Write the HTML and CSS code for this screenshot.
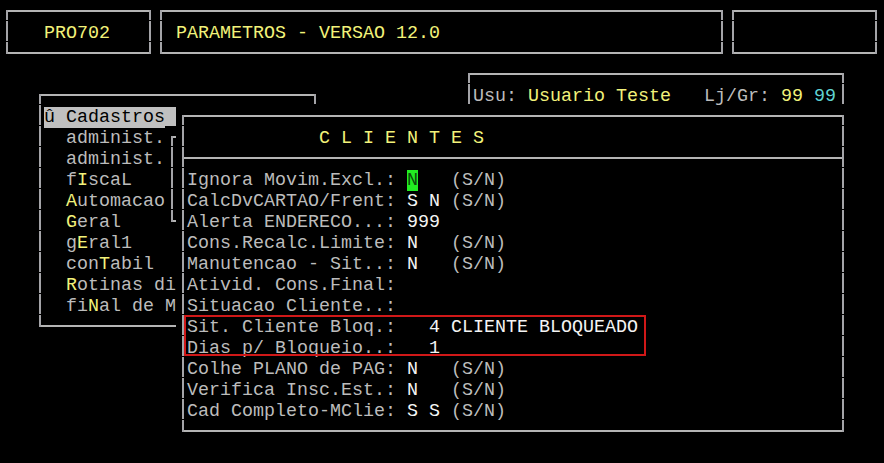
FILE: index.html
```html
<!DOCTYPE html>
<html lang="pt">
<head>
<meta charset="utf-8">
<title>PRO702 - Parametros</title>
<link rel="stylesheet" href="styles.css">
</head>
<body>
<div class="screen">
  <div class="win w-prog"><div class="line">   <span class="y">PRO702</span></div></div>
  <div class="win w-title"><div class="line"> <span class="y">PARAMETROS - VERSAO 12.0</span></div></div>
  <div class="win w-blank"></div>

  <div class="win w-user"><div class="line">Usu: <span class="y">Usuario Teste</span>   Lj/Gr: <span class="y">99</span> <span class="c">99</span></div></div>

  <div class="win w-menu">
    <div class="line"><span class="sel">û Cadastros </span></div>
    <div class="line">  administ.</div>
    <div class="line">  administ.</div>
    <div class="line">  f<span class="y">I</span>scaL</div>
    <div class="line">  <span class="y">A</span>utomacao</div>
    <div class="line">  <span class="y">G</span>eral</div>
    <div class="line">  g<span class="y">E</span>ral1</div>
    <div class="line">  con<span class="y">T</span>abil</div>
    <div class="line">  <span class="y">R</span>otinas di</div>
    <div class="line">  fi<span class="y">N</span>al de M</div>
  </div>

  <div class="win w-sub"></div>

  <div class="win w-cli">
    <div class="line">            <span class="y">C L I E N T E S</span></div>
    <div class="sep"></div>
    <div class="line">Ignora Movim.Excl.: <span class="cur">N</span>   (S/N)</div>
    <div class="line">CalcDvCARTAO/Frent: <span class="v">S N</span> (S/N)</div>
    <div class="line">Alerta ENDERECO...: <span class="v">999</span></div>
    <div class="line">Cons.Recalc.Limite: <span class="v">N</span>   (S/N)</div>
    <div class="line">Manutencao - Sit..: <span class="v">N</span>   (S/N)</div>
    <div class="line">Ativid. Cons.Final:</div>
    <div class="line">Situacao Cliente..:</div>
    <div class="line">Sit. Cliente Bloq.:   <span class="v">4 CLIENTE BLOQUEADO</span></div>
    <div class="line">Dias p/ Bloqueio..:   <span class="v">1</span></div>
    <div class="line">Colhe PLANO de PAG: <span class="v">N</span>   (S/N)</div>
    <div class="line">Verifica Insc.Est.: <span class="v">N</span>   (S/N)</div>
    <div class="line">Cad Completo-MClie: <span class="v">S S</span> (S/N)</div>
  </div>

  <div class="mark"></div>
</div>
</body>
</html>
```
FILE: styles.css
```css
html, body {
  margin: 0;
  padding: 0;
  background: #000;
}

.screen {
  position: relative;
  width: 884px;
  height: 463px;
  overflow: hidden;
  background: #000;
  font-family: "Liberation Mono", "DejaVu Sans Mono", monospace;
  font-size: 18.33px;
  line-height: 21px;
  color: #bcbcbc;
}

/* a terminal window: covers whole character cells, border runs through cell centres */
.win {
  position: absolute;
  box-sizing: border-box;
  background: #000;
  padding: 21px 0 0 11px;
}

.win::before {
  content: "";
  position: absolute;
  left: 6px;
  top: 10px;
  right: 3px;
  bottom: 9px;
  border-top: 2px solid #b4b4b4;
  border-bottom: 2px solid #b4b4b4;
  border-left: 2px solid transparent;
  border-right: 2px solid transparent;
  pointer-events: none;
}

.win::after {
  content: "";
  position: absolute;
  left: 6px;
  top: 10px;
  right: 3px;
  bottom: 9px;
  border-left: 2px solid #a4a4a8;
  border-right: 2px solid #a4a4a8;
  -webkit-mask: repeating-linear-gradient(to bottom, #000 0 10px, transparent 10px 11px, #000 11px 21px);
  mask: repeating-linear-gradient(to bottom, #000 0 10px, transparent 10px 11px, #000 11px 21px);
  pointer-events: none;
}

.line {
  box-sizing: border-box;
  white-space: pre;
  height: 21px;
  padding-top: 2px;
}

.w-prog  { left: 0;     top: 0;   width: 154px; height: 63px; }
.w-title { left: 154px; top: 0;   width: 572px; height: 63px; }
.w-blank { left: 726px; top: 0;   width: 154px; height: 63px; }
.w-user  { left: 462px; top: 63px;  width: 385px; height: 84px; }
.w-menu  { left: 33px;  top: 84px;  width: 286px; height: 252px; }
.w-sub   { left: 165px; top: 126px; width: 176px; height: 105px; }
.w-cli   { left: 176px; top: 105px; width: 671px; height: 336px; }

.sep {
  height: 0;
  margin: 10px 3px 9px -5px;
  border-top: 2px solid #b4b4b4;
}

.y   { color: #f2f27a; }
.c   { color: #5fd3d3; }
.v   { color: #f4f4f4; }

.sel {
  background: #c0c0c0;
  color: #000;
}

.cur {
  background: #22ee22;
  color: #0a4a0a;
}

.mark {
  position: absolute;
  left: 184px;
  top: 315px;
  width: 462px;
  height: 41px;
  box-sizing: border-box;
  border: 2px solid #d01818;
}
```
